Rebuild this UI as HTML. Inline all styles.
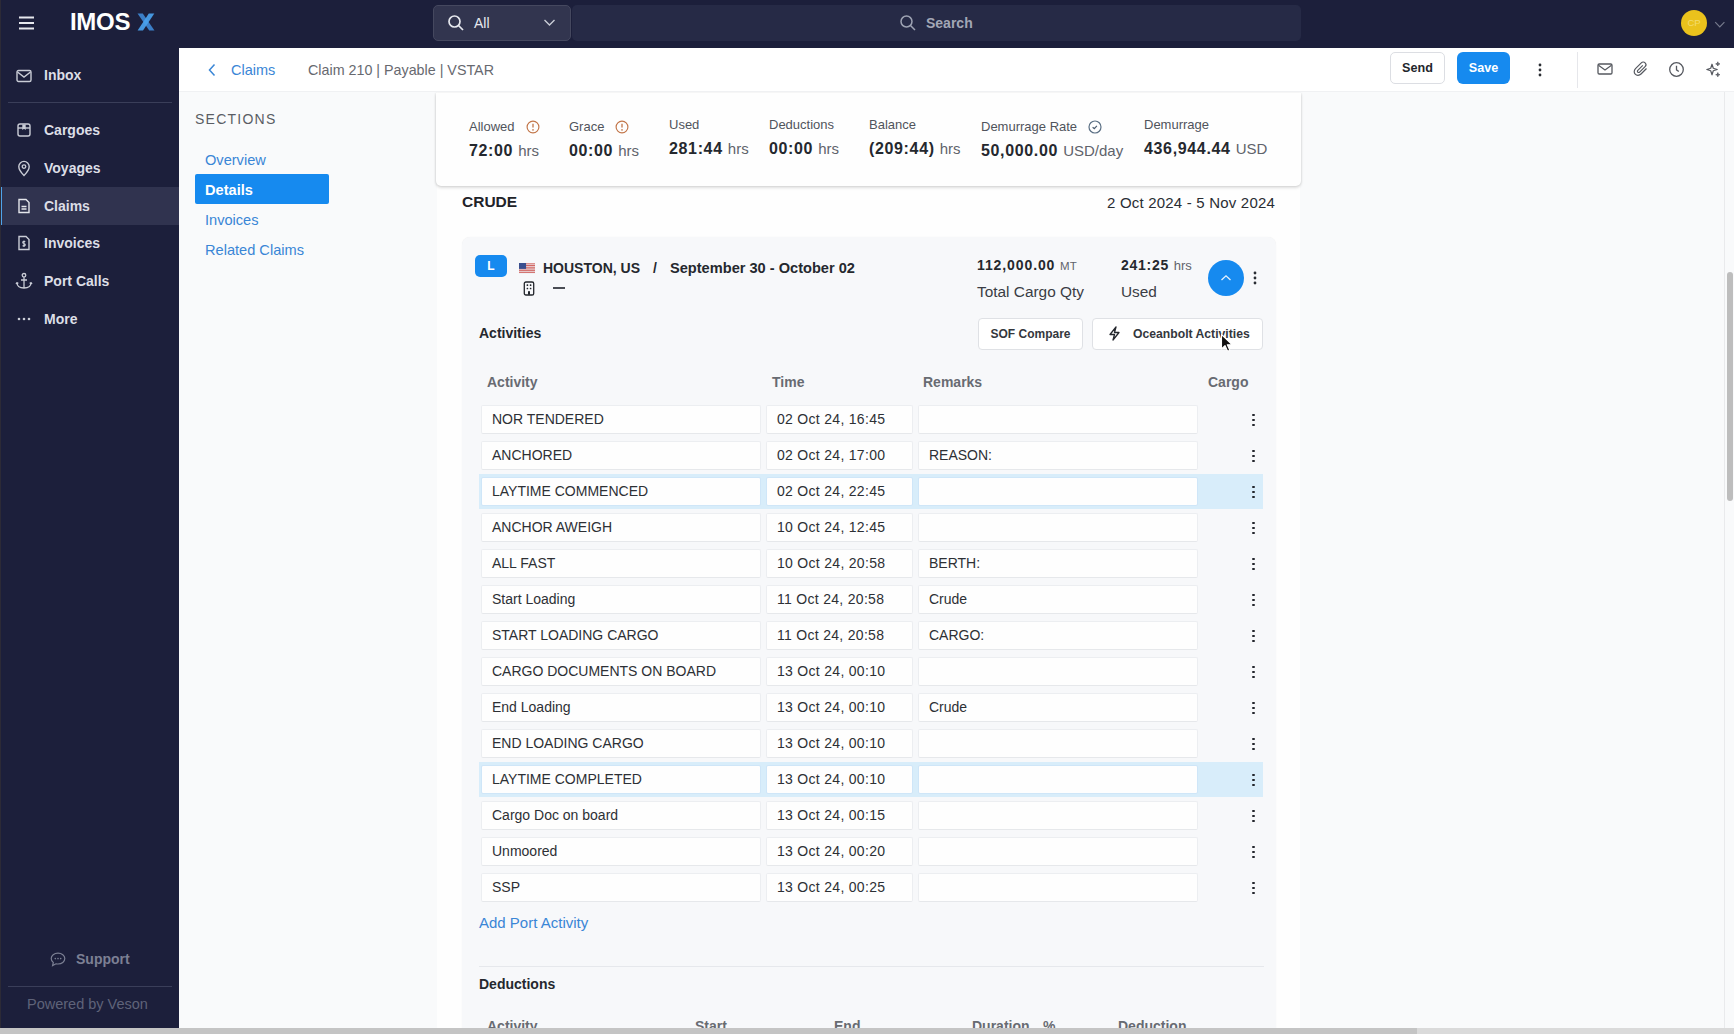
<!DOCTYPE html>
<html><head><meta charset="utf-8">
<style>
*{box-sizing:border-box;margin:0;padding:0}
html,body{width:1734px;height:1034px;overflow:hidden;background:#f9fafb;font-family:"Liberation Sans",sans-serif;color:#1f2328}
.abs{position:absolute}
#top{position:absolute;left:0;top:0;width:1734px;height:48px;background:#1c1f3b}
#side{position:absolute;left:0;top:48px;width:179px;height:986px;background:#1c1f3b}
#hdr{position:absolute;left:179px;top:48px;width:1555px;height:44px;background:#fff;border-bottom:1px solid #f0f1f3}
.nav{position:absolute;left:0;width:179px;height:38px;color:#dcdee6;font-size:14px;font-weight:bold}
.nav span{position:absolute;left:44px;top:11px}
.nav svg{position:absolute;left:16px;top:12px}
.sec{position:absolute;left:205px;font-size:14.6px;color:#3a86d6}
.lbl{position:absolute;font-size:13px;color:#50545c}
.val{position:absolute;font-size:16px;font-weight:bold;color:#25282e;letter-spacing:.65px}
.val small{font-size:15px;font-weight:normal;color:#5f636b;letter-spacing:0}
.row{position:absolute;left:479px;width:784px;height:36px}
.cell{position:absolute;top:2.5px;height:29.5px;background:#fefefe;border:1px solid #eceef1;border-bottom-color:#e6e8eb;border-radius:2px;font-size:14px;color:#2d3035;padding:5px 0 0 10px}
.c1{left:2px;width:280px}
.c2{left:287px;width:147px;letter-spacing:.3px}
.c3{left:439px;width:280px}
.kb{position:absolute;left:773px;top:11px;width:3px;height:14px}
.kb i{position:absolute;left:0;width:2.5px;height:2.5px;border-radius:50%;background:#23262c}
.hl{background:#d8edfa;height:35px}
.hl .cell{border-color:#cfe6f8}
.th{position:absolute;top:374px;font-size:14px;color:#686b72;font-weight:bold}
</style></head>
<body>
<div id="top">
  <svg class="abs" style="left:18px;top:15.7px" width="17" height="14" viewBox="0 0 17 14"><path d="M1 1.5H16M1 7H16M1 12.5H16" stroke="#e6e8ee" stroke-width="1.8"/></svg>
  <div class="abs" style="left:70px;top:8px;font-size:24px;font-weight:bold;color:#fff;letter-spacing:-0.3px">IMOS</div>
  <svg class="abs" width="18" height="18" viewBox="0 0 18 18" style="left:137px;top:12.5px"><path d="M0.5 0.5H5.8L17.5 17.5H12.2Z" fill="#3b7ec6"/><path d="M11.8 0.5H17.3L6 17.5H0.6Z" fill="#4aa2ee" opacity=".92"/></svg>
  <div class="abs" style="left:433px;top:5px;width:138px;height:36px;background:#32354f;border-radius:5px;border:1px solid #45485f"></div>
  <svg class="abs" style="left:447px;top:14px" width="18" height="18" viewBox="0 0 18 18"><circle cx="7.5" cy="7.5" r="5.5" fill="none" stroke="#e6e8ee" stroke-width="1.7"/><path d="M11.5 11.5L16 16" stroke="#e6e8ee" stroke-width="1.7"/></svg>
  <div class="abs" style="left:474px;top:15px;font-size:14px;color:#e6e8ee">All</div>
  <svg class="abs" style="left:543px;top:18px" width="13" height="9" viewBox="0 0 13 9"><path d="M1.5 2L6.5 7L11.5 2" fill="none" stroke="#c9ccd6" stroke-width="1.4"/></svg>
  <div class="abs" style="left:572px;top:5px;width:729px;height:36px;background:#262a46;border-radius:5px"></div>
  <svg class="abs" style="left:899px;top:14px" width="18" height="18" viewBox="0 0 18 18"><circle cx="7.5" cy="7.5" r="5.5" fill="none" stroke="#9ea3b3" stroke-width="1.5"/><path d="M11.5 11.5L16 16" stroke="#9ea3b3" stroke-width="1.5"/></svg>
  <div class="abs" style="left:926px;top:15px;font-size:14px;color:#a3a7b6;font-weight:bold">Search</div>
  <div class="abs" style="left:1681px;top:10px;width:26px;height:26px;border-radius:50%;background:#eac21c;color:#f3dc6e;font-size:9.5px;text-align:center;line-height:26px">CP</div>
  <svg class="abs" style="left:1713.5px;top:20.5px" width="12" height="8" viewBox="0 0 12 8"><path d="M1.2 1.2L5.8 5.8L10.4 1.2" fill="none" stroke="#767a8c" stroke-width="1.2"/></svg>
</div>

<div id="side">
  <div class="nav" style="top:7.7px"><svg width="16" height="14" viewBox="0 0 16 14" style="top:13px;left:16px"><rect x="1" y="1.5" width="14" height="11" rx="1.5" fill="none" stroke="#c9ccd6" stroke-width="1.4"/><path d="M1.5 3L8 8L14.5 3" fill="none" stroke="#c9ccd6" stroke-width="1.4"/></svg><span>Inbox</span></div>
  <div class="abs" style="left:8px;top:54px;width:164px;height:1px;background:#3a3e59"></div>
  <div class="nav" style="top:63px"><svg width="16" height="16" viewBox="0 0 16 16" style="top:11px"><rect x="2" y="2" width="12" height="12" rx="2" fill="none" stroke="#c9ccd6" stroke-width="1.4"/><path d="M2 6H14" stroke="#c9ccd6" stroke-width="1.4"/><path d="M6.3 2.5H9.7V8L8 6.8L6.3 8Z" fill="#c9ccd6"/></svg><span>Cargoes</span></div>
  <div class="nav" style="top:101px"><svg width="16" height="17" viewBox="0 0 16 17" style="top:11px"><path d="M8 15.5C8 15.5 2.8 10.5 2.8 6.6A5.2 5.2 0 0 1 13.2 6.6C13.2 10.5 8 15.5 8 15.5Z" fill="none" stroke="#c9ccd6" stroke-width="1.4"/><circle cx="8" cy="6.6" r="1.8" fill="none" stroke="#c9ccd6" stroke-width="1.3"/></svg><span>Voyages</span></div>
  <div class="nav" style="top:139px;background:#30334f;border-left:2px solid #4fa3ea"><svg width="16" height="16" viewBox="0 0 16 16" style="top:11px;left:14px"><path d="M3 1.5H10L13 4.5V14.5H3Z" fill="none" stroke="#e4e6ec" stroke-width="1.4"/><path d="M5.5 8.5H10.5M5.5 11H10.5" stroke="#e4e6ec" stroke-width="1.3"/></svg><span style="left:42px">Claims</span></div>
  <div class="nav" style="top:176px"><svg width="16" height="16" viewBox="0 0 16 16" style="top:11px"><path d="M3 1.5H10L13 4.5V14.5H3Z" fill="none" stroke="#c9ccd6" stroke-width="1.4"/><path d="M9.3 6.6C8.7 6 6.7 6 6.7 7.4C6.7 8.8 9.3 8.2 9.3 9.8C9.3 11.2 7.3 11.2 6.6 10.5M8 5.4V12" fill="none" stroke="#c9ccd6" stroke-width="1.1"/></svg><span>Invoices</span></div>
  <div class="nav" style="top:214px"><svg width="18" height="18" viewBox="0 0 18 18" style="top:10px;left:15px"><circle cx="9" cy="3.3" r="1.8" fill="none" stroke="#c9ccd6" stroke-width="1.3"/><path d="M9 5.2V16M6 8H12M2 10.5C2 14 5 16 9 16C13 16 16 14 16 10.5M2 10.5L1 11.8M2 10.5L3.3 11.6M16 10.5L17 11.8M16 10.5L14.7 11.6" fill="none" stroke="#c9ccd6" stroke-width="1.3"/></svg><span>Port Calls</span></div>
  <div class="nav" style="top:252px"><svg width="16" height="4" viewBox="0 0 16 4" style="top:17px;left:17px"><circle cx="2" cy="2" r="1.3" fill="#c9ccd6"/><circle cx="7" cy="2" r="1.3" fill="#c9ccd6"/><circle cx="12" cy="2" r="1.3" fill="#c9ccd6"/></svg><span>More</span></div>
  <svg class="abs" width="16" height="15" viewBox="0 0 16 15" style="left:50px;top:904px"><path d="M8 1.2C4.2 1.2 1.2 3.6 1.2 6.6C1.2 8.2 2 9.5 3.3 10.5L2.6 13.6L6 11.8C6.6 11.9 7.3 12 8 12C11.8 12 14.8 9.6 14.8 6.6C14.8 3.6 11.8 1.2 8 1.2Z" fill="none" stroke="#7c8094" stroke-width="1.2"/><circle cx="5.3" cy="6.6" r=".8" fill="#7c8094"/><circle cx="8" cy="6.6" r=".8" fill="#7c8094"/><circle cx="10.7" cy="6.6" r=".8" fill="#7c8094"/></svg>
  <div class="abs" style="left:76px;top:903px;font-size:14px;font-weight:bold;color:#7c8094">Support</div>
  <div class="abs" style="left:8px;top:938px;width:164px;height:1px;background:#3a3e59"></div>
  <div class="abs" style="left:27px;top:948px;font-size:14.5px;color:#5f6379">Powered by Veson</div>
</div>

<div id="hdr">
  <svg class="abs" width="10" height="14" viewBox="0 0 10 14" style="left:28px;top:15px"><path d="M7.5 1.5L2.5 7L7.5 12.5" fill="none" stroke="#3a86d6" stroke-width="1.5"/></svg>
  <div class="abs" style="left:52px;top:14px;font-size:14.5px;color:#3a86d6">Claims</div>
  <div class="abs" style="left:129px;top:14px;font-size:14.3px;color:#67696f">Claim 210 | Payable | VSTAR</div>
  <div class="abs" style="left:1211px;top:4px;width:55px;height:32px;border:1px solid #dcdee3;border-radius:5px;background:#fff;font-size:12.6px;font-weight:bold;color:#23262c;text-align:center;line-height:30px">Send</div>
  <div class="abs" style="left:1278px;top:4px;width:53px;height:32px;border-radius:6px;background:#168aef;font-size:12.6px;font-weight:bold;color:#fff;text-align:center;line-height:32px">Save</div>
  <svg class="abs" width="4" height="14" viewBox="0 0 4 14" style="left:1359px;top:15px"><circle cx="2" cy="2" r="1.4" fill="#2a2d33"/><circle cx="2" cy="7" r="1.4" fill="#2a2d33"/><circle cx="2" cy="12" r="1.4" fill="#2a2d33"/></svg>
  <div class="abs" style="left:1398px;top:4px;width:1px;height:36px;background:#e6e7eb"></div>
  <svg class="abs" width="16" height="12" viewBox="0 0 16 12" style="left:1418px;top:15.3px"><rect x="1" y="1" width="14" height="10" rx="1.3" fill="none" stroke="#55585f" stroke-width="1.3"/><path d="M1.5 2.3L8 7L14.5 2.3" fill="none" stroke="#55585f" stroke-width="1.2"/></svg>
  <svg class="abs" width="16" height="16" viewBox="0 0 16 16" style="left:1454px;top:13px"><path d="M13.5 7.5L8 13C6.3 14.7 3.6 14.7 2.2 13.2C0.8 11.8 0.9 9.2 2.5 7.6L8.3 1.8C9.4 0.7 11.1 0.8 12.1 1.8C13.1 2.8 13.2 4.5 12.1 5.6L6.6 11.1C6.1 11.6 5.2 11.6 4.8 11.1C4.3 10.6 4.3 9.8 4.8 9.3L9.8 4.3" fill="none" stroke="#55585f" stroke-width="1.2"/></svg>
  <svg class="abs" width="17" height="17" viewBox="0 0 17 17" style="left:1489px;top:13px"><circle cx="8.5" cy="8.5" r="6.8" fill="none" stroke="#55585f" stroke-width="1.3"/><path d="M8.5 4.8V8.8L10.8 10.5" fill="none" stroke="#55585f" stroke-width="1.3"/></svg>
  <svg class="abs" width="18" height="18" viewBox="0 0 18 18" style="left:1525px;top:12px"><path d="M8 4.2L9.3 8.2L13.2 9.5L9.3 10.8L8 14.8L6.7 10.8L2.8 9.5L6.7 8.2Z" fill="none" stroke="#55585f" stroke-width="1.2" stroke-linejoin="round"/><path d="M13.8 1.8L14.3 3.4L15.9 3.9L14.3 4.4L13.8 6L13.3 4.4L11.7 3.9L13.3 3.4Z" fill="#55585f" stroke="#55585f" stroke-width=".7" stroke-linejoin="round"/><path d="M13.8 12.6L14.3 14.2L15.9 14.7L14.3 15.2L13.8 16.8L13.3 15.2L11.7 14.7L13.3 14.2Z" fill="#55585f" stroke="#55585f" stroke-width=".7" stroke-linejoin="round"/></svg>
</div>
<div class="abs" style="left:195px;top:111px;font-size:14px;letter-spacing:1.25px;color:#5a5d64">SECTIONS</div>
<div class="sec" style="top:152px">Overview</div>
<div class="abs" style="left:195px;top:174px;width:134px;height:30px;background:#168aef;border-radius:2px"></div>
<div class="sec" style="top:182px;color:#fff;font-weight:bold">Details</div>
<div class="sec" style="top:212px">Invoices</div>
<div class="sec" style="top:242px">Related Claims</div>

<div class="abs" style="left:437px;top:92px;width:863px;height:942px;background:#fefefe"></div>
<div class="abs" style="left:436px;top:93px;width:865px;height:93px;background:#fefefe;border-radius:0 0 5px 5px;box-shadow:0 2px 3px rgba(0,0,0,.13), 1px 0 2px rgba(0,0,0,.06), -1px 0 2px rgba(0,0,0,.07)"></div>
<div class="lbl" style="left:469px;top:119px">Allowed</div><svg class="abs" width="14" height="14" viewBox="0 0 14 14" style="left:526px;top:120px"><circle cx="7" cy="7" r="5.9" fill="none" stroke="#c27548" stroke-width="1.15"/><path d="M7 3.8V7.6" stroke="#c27548" stroke-width="1.3"/><circle cx="7" cy="9.9" r=".8" fill="#c27548"/></svg>
<div class="val" style="left:469px;top:142px">72:00 <small>hrs</small></div>
<div class="lbl" style="left:569px;top:119px">Grace</div><svg class="abs" width="14" height="14" viewBox="0 0 14 14" style="left:615px;top:120px"><circle cx="7" cy="7" r="5.9" fill="none" stroke="#c27548" stroke-width="1.15"/><path d="M7 3.8V7.6" stroke="#c27548" stroke-width="1.3"/><circle cx="7" cy="9.9" r=".8" fill="#c27548"/></svg>
<div class="val" style="left:569px;top:142px">00:00 <small>hrs</small></div>
<div class="lbl" style="left:669px;top:117px">Used</div>
<div class="val" style="left:669px;top:140px">281:44 <small>hrs</small></div>
<div class="lbl" style="left:769px;top:117px">Deductions</div>
<div class="val" style="left:769px;top:140px">00:00 <small>hrs</small></div>
<div class="lbl" style="left:869px;top:117px">Balance</div>
<div class="val" style="left:869px;top:140px;width:93px;overflow:hidden;white-space:nowrap">(209:44) <small>hrs</small></div>
<div class="lbl" style="left:981px;top:119px">Demurrage Rate</div>
<svg class="abs" width="14" height="14" viewBox="0 0 14 14" style="left:1088px;top:120px"><circle cx="7" cy="7" r="6" fill="none" stroke="#5a6f84" stroke-width="1.2"/><path d="M4.6 7.3L6.3 8.6L8.9 5.9" fill="none" stroke="#4c5d70" stroke-width="1.2"/></svg>
<div class="val" style="left:981px;top:142px">50,000.00 <small>USD/day</small></div>
<div class="lbl" style="left:1144px;top:117px">Demurrage</div>
<div class="val" style="left:1144px;top:140px">436,944.44 <small>USD</small></div>

<div class="abs" style="left:462px;top:193px;font-size:15.5px;font-weight:bold;color:#1f2328">CRUDE</div>
<div class="abs" style="left:1107px;top:194px;font-size:15px;color:#2a2d33;letter-spacing:.2px">2 Oct 2024 - 5 Nov 2024</div>

<div class="abs" style="left:462px;top:237px;width:814px;height:797px;background:#f7f8fa;border-radius:8px 8px 0 0;box-shadow:0 0 1px rgba(0,0,0,.08)"></div>

<div class="abs" style="left:475px;top:255px;width:32px;height:22px;background:#168aef;border-radius:5px;color:#fff;font-size:12px;font-weight:bold;text-align:center;line-height:22px">L</div>
<svg class="abs" width="17" height="11" viewBox="0 0 17 11" preserveAspectRatio="none" style="left:519px;top:262.5px;width:16px"><rect width="17" height="11" fill="#f1f1f4"/><path d="M0 .85H17M0 2.55H17M0 4.25H17M0 5.95H17M0 7.65H17M0 9.35H17" stroke="#c8413c" stroke-width=".85"/><rect width="7.5" height="5.9" fill="#3a4f8e"/></svg>
<div class="abs" style="left:543px;top:260px;font-size:14px;font-weight:bold;color:#25282e">HOUSTON, US</div>
<div class="abs" style="left:653px;top:260px;font-size:14px;font-weight:bold;color:#25282e">/</div>
<div class="abs" style="left:670px;top:260px;font-size:14.6px;font-weight:bold;color:#25282e">September 30 - October 02</div>
<svg class="abs" width="12" height="15" viewBox="0 0 12 15" style="left:523px;top:280.5px"><rect x="1.3" y="1" width="9.4" height="13" rx="1.6" fill="none" stroke="#23262c" stroke-width="1.3"/><rect x="3.6" y="3.3" width="1.6" height="1.6" rx=".5" fill="#23262c"/><rect x="6.8" y="3.3" width="1.6" height="1.6" rx=".5" fill="#23262c"/><rect x="3.6" y="6.7" width="1.6" height="1.6" rx=".5" fill="#23262c"/><rect x="6.8" y="6.7" width="1.6" height="1.6" rx=".5" fill="#23262c"/><rect x="5" y="10.2" width="2" height="3.5" fill="#23262c"/></svg>
<div class="abs" style="left:553px;top:287.3px;width:12px;height:1.4px;background:#4a4d54"></div>

<div class="abs" style="left:977px;top:257px;font-size:14px;font-weight:bold;color:#25282e;letter-spacing:.9px">112,000.00 <span style="font-size:11.5px;font-weight:normal;color:#5f636b;letter-spacing:0">MT</span></div>
<div class="abs" style="left:977px;top:283px;font-size:15.4px;color:#3a3d44">Total Cargo Qty</div>
<div class="abs" style="left:1121px;top:257px;font-size:14px;font-weight:bold;color:#25282e;letter-spacing:.75px">241:25 <span style="font-size:13px;font-weight:normal;color:#5f636b;letter-spacing:0">hrs</span></div>
<div class="abs" style="left:1121px;top:283px;font-size:15.4px;color:#3a3d44">Used</div>
<div class="abs" style="left:1208px;top:260px;width:36px;height:36px;border-radius:50%;background:#168aef"></div>
<svg class="abs" width="12" height="8" viewBox="0 0 12 8" style="left:1220px;top:274px"><path d="M1.5 6L6 1.8L10.5 6" fill="none" stroke="#e8f2fd" stroke-width="1.3"/></svg>
<svg class="abs" width="4" height="14" viewBox="0 0 4 14" style="left:1253px;top:271px"><circle cx="2" cy="2" r="1.4" fill="#2a2d33"/><circle cx="2" cy="7" r="1.4" fill="#2a2d33"/><circle cx="2" cy="12" r="1.4" fill="#2a2d33"/></svg>

<div class="abs" style="left:479px;top:325px;font-size:14px;font-weight:bold;color:#25282e">Activities</div>
<div class="abs" style="left:978px;top:318px;width:105px;height:32px;background:#fff;border:1px solid #dfe1e5;border-radius:4px;font-size:12px;font-weight:bold;color:#34373d;text-align:center;line-height:30px">SOF Compare</div>
<div class="abs" style="left:1092px;top:318px;width:171px;height:32px;background:#fff;border:1px solid #dfe1e5;border-radius:4px"></div>
<svg class="abs" width="13" height="15" viewBox="0 0 13 15" style="left:1108px;top:326px"><path d="M8 1L2 8.5H6.5L5 14L11 6.5H6.5Z" fill="none" stroke="#25282e" stroke-width="1.3" stroke-linejoin="round"/></svg>
<div class="abs" style="left:1133px;top:327px;font-size:12.2px;font-weight:bold;color:#34373d">Oceanbolt Activities</div>

<div class="th" style="left:487px">Activity</div>
<div class="th" style="left:772px">Time</div>
<div class="th" style="left:923px">Remarks</div>
<div class="th" style="left:1208px">Cargo</div>
<div class="row" style="top:402px"><div class="cell c1">NOR TENDERED</div><div class="cell c2">02 Oct 24, 16:45</div><div class="cell c3"></div><div class="kb"><i style="top:.5px"></i><i style="top:5.5px"></i><i style="top:10.5px"></i></div></div>
<div class="row" style="top:438px"><div class="cell c1">ANCHORED</div><div class="cell c2">02 Oct 24, 17:00</div><div class="cell c3">REASON:</div><div class="kb"><i style="top:.5px"></i><i style="top:5.5px"></i><i style="top:10.5px"></i></div></div>
<div class="row hl" style="top:474px"><div class="cell c1">LAYTIME COMMENCED</div><div class="cell c2">02 Oct 24, 22:45</div><div class="cell c3"></div><div class="kb"><i style="top:.5px"></i><i style="top:5.5px"></i><i style="top:10.5px"></i></div></div>
<div class="row" style="top:510px"><div class="cell c1">ANCHOR AWEIGH</div><div class="cell c2">10 Oct 24, 12:45</div><div class="cell c3"></div><div class="kb"><i style="top:.5px"></i><i style="top:5.5px"></i><i style="top:10.5px"></i></div></div>
<div class="row" style="top:546px"><div class="cell c1">ALL FAST</div><div class="cell c2">10 Oct 24, 20:58</div><div class="cell c3">BERTH:</div><div class="kb"><i style="top:.5px"></i><i style="top:5.5px"></i><i style="top:10.5px"></i></div></div>
<div class="row" style="top:582px"><div class="cell c1">Start Loading</div><div class="cell c2">11 Oct 24, 20:58</div><div class="cell c3">Crude</div><div class="kb"><i style="top:.5px"></i><i style="top:5.5px"></i><i style="top:10.5px"></i></div></div>
<div class="row" style="top:618px"><div class="cell c1">START LOADING CARGO</div><div class="cell c2">11 Oct 24, 20:58</div><div class="cell c3">CARGO:</div><div class="kb"><i style="top:.5px"></i><i style="top:5.5px"></i><i style="top:10.5px"></i></div></div>
<div class="row" style="top:654px"><div class="cell c1">CARGO DOCUMENTS ON BOARD</div><div class="cell c2">13 Oct 24, 00:10</div><div class="cell c3"></div><div class="kb"><i style="top:.5px"></i><i style="top:5.5px"></i><i style="top:10.5px"></i></div></div>
<div class="row" style="top:690px"><div class="cell c1">End Loading</div><div class="cell c2">13 Oct 24, 00:10</div><div class="cell c3">Crude</div><div class="kb"><i style="top:.5px"></i><i style="top:5.5px"></i><i style="top:10.5px"></i></div></div>
<div class="row" style="top:726px"><div class="cell c1">END LOADING CARGO</div><div class="cell c2">13 Oct 24, 00:10</div><div class="cell c3"></div><div class="kb"><i style="top:.5px"></i><i style="top:5.5px"></i><i style="top:10.5px"></i></div></div>
<div class="row hl" style="top:762px"><div class="cell c1">LAYTIME COMPLETED</div><div class="cell c2">13 Oct 24, 00:10</div><div class="cell c3"></div><div class="kb"><i style="top:.5px"></i><i style="top:5.5px"></i><i style="top:10.5px"></i></div></div>
<div class="row" style="top:798px"><div class="cell c1">Cargo Doc on board</div><div class="cell c2">13 Oct 24, 00:15</div><div class="cell c3"></div><div class="kb"><i style="top:.5px"></i><i style="top:5.5px"></i><i style="top:10.5px"></i></div></div>
<div class="row" style="top:834px"><div class="cell c1">Unmoored</div><div class="cell c2">13 Oct 24, 00:20</div><div class="cell c3"></div><div class="kb"><i style="top:.5px"></i><i style="top:5.5px"></i><i style="top:10.5px"></i></div></div>
<div class="row" style="top:870px"><div class="cell c1">SSP</div><div class="cell c2">13 Oct 24, 00:25</div><div class="cell c3"></div><div class="kb"><i style="top:.5px"></i><i style="top:5.5px"></i><i style="top:10.5px"></i></div></div>
<div class="abs" style="left:479px;top:914px;font-size:15px;color:#3a86d6">Add Port Activity</div>
<div class="abs" style="left:479px;top:966px;width:785px;height:1px;background:#e6e8ec"></div>
<div class="abs" style="left:479px;top:976px;font-size:14px;font-weight:bold;color:#25282e">Deductions</div>
<div class="th" style="left:487px;top:1018px">Activity</div>
<div class="th" style="left:695px;top:1018px">Start</div>
<div class="th" style="left:834px;top:1018px">End</div>
<div class="th" style="left:972px;top:1018px">Duration</div>
<div class="th" style="left:1043px;top:1018px">%</div>
<div class="th" style="left:1118px;top:1018px">Deduction</div>

<svg class="abs" width="14" height="20" viewBox="0 0 14 20" style="left:1220px;top:333px"><path d="M1.5 1.5V16L5 12.6L7.6 18.2L9.8 17.2L7.3 11.7H12Z" fill="#111" stroke="#fff" stroke-width="1.1" stroke-linejoin="round"/></svg>

<div class="abs" style="left:1724px;top:92px;width:1px;height:936px;background:#e9eaec"></div>
<div class="abs" style="left:1727px;top:272px;width:6px;height:229px;background:#bdbdbd;border-radius:3px"></div>
<div class="abs" style="left:0;top:1028px;width:1734px;height:6px;background:#dadada"></div>
<div class="abs" style="left:0;top:1028px;width:1417px;height:6px;background:#c4c4c4"></div>

<div class="abs" style="left:0;top:0;width:1px;height:1028px;background:#2c2a36"></div>
</body></html>
